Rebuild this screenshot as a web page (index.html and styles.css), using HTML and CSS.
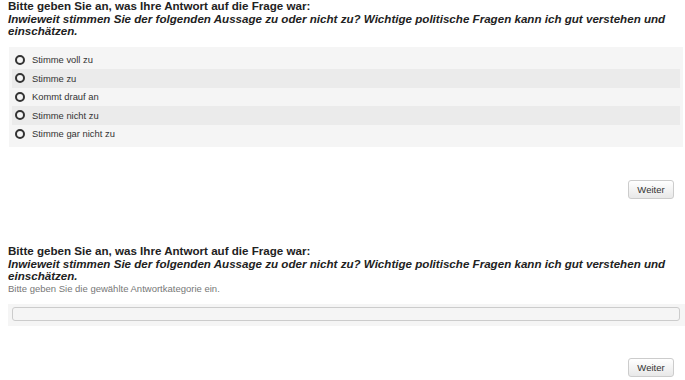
FILE: index.html
```html
<!DOCTYPE html>
<html lang="de">
<head>
  <meta charset="UTF-8" />
  <meta name="viewport" content="width=device-width, initial-scale=1.0"/>
  <title>Umfrage</title>
  <link rel="stylesheet" href="styles.css">
</head>
<body>

<section class="question first">
  <h2 class="prompt">
    Bitte geben Sie an, was Ihre Antwort auf die Frage war:<br>
    <em>Inwieweit stimmen Sie der folgenden Aussage zu oder nicht zu? Wichtige politische Fragen kann ich gut verstehen und einschätzen.</em>
  </h2>

  <div class="choices">
    <label class="choice"><span class="radio"></span>Stimme voll zu</label>
    <label class="choice"><span class="radio"></span>Stimme zu</label>
    <label class="choice"><span class="radio"></span>Kommt drauf an</label>
    <label class="choice"><span class="radio"></span>Stimme nicht zu</label>
    <label class="choice"><span class="radio"></span>Stimme gar nicht zu</label>
  </div>

  <div class="actions">
    <button class="next">Weiter</button>
  </div>
</section>

<section class="question second">
  <h2 class="prompt">
    Bitte geben Sie an, was Ihre Antwort auf die Frage war:<br>
    <em>Inwieweit stimmen Sie der folgenden Aussage zu oder nicht zu? Wichtige politische Fragen kann ich gut verstehen und einschätzen.</em>
  </h2>
  <p class="hint">Bitte geben Sie die gewählte Antwortkategorie ein.</p>

  <div class="answer-box">
    <input type="text" class="answer">
  </div>

  <div class="actions">
    <button class="next">Weiter</button>
  </div>
</section>

</body>
</html>
```

FILE: styles.css
```css
body {
  font-family: 'Liberation Sans', Arial, sans-serif;
  margin: 0;
  padding: 0 0 0 8px;
  background: #fff;
  color: #222;
}
.prompt {
  font-size: 11.6px;
  line-height: 12.5px;
  font-weight: bold;
  margin: 0;
}
.prompt em {
  font-style: italic;
}
.choices {
  background: #f5f5f5;
  margin: 9.5px 2px 0 1px;
  padding: 3.5px 3px;
}
.choice {
  display: flex;
  align-items: center;
  height: 18.5px;
  font-size: 9.4px;
  color: #333;
  padding-left: 3px;
}
.choice:nth-child(even) {
  background: #ebebeb;
}
.radio {
  width: 6px;
  height: 6px;
  border: 2px solid #333;
  border-radius: 50%;
  background: #f5f5f5;
  margin-right: 7px;
}
.actions {
  display: flex;
  justify-content: flex-end;
  padding-right: 11px;
}
.first .actions {
  margin-top: 33px;
}
.next {
  font-family: 'Liberation Sans', Arial, sans-serif;
  font-size: 9.5px;
  color: #333;
  height: 19px;
  width: 46px;
  padding: 0;
  border: 1px solid #ccc;
  border-radius: 3px;
  background: linear-gradient(#fff, #e8e8e8);
  cursor: pointer;
}
.second {
  margin-top: 46.5px;
}
.hint {
  font-size: 9.5px;
  color: #777;
  margin: 0;
  line-height: 12px;
}
.answer-box {
  background: #f5f5f5;
  margin-top: 9px;
  padding: 3px 5px 5px 4px;
}
.answer {
  display: block;
  box-sizing: border-box;
  width: 100%;
  height: 14px;
  border: 1px solid #ccc;
  border-radius: 3px;
  background: #f5f5f5;
  padding: 0;
}
.second .actions {
  margin-top: 32px;
}
```
